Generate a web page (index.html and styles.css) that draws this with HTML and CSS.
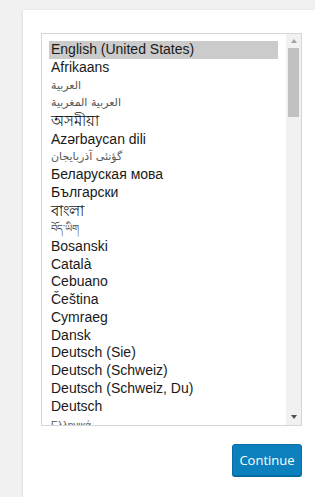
FILE: index.html
```html
<!DOCTYPE html>
<html lang="en">
<head>
<meta charset="utf-8">
<title>Select a default language</title>
<link rel="stylesheet" href="styles.css">
</head>
<body>
<div class="card">
  <div class="chooser">
    <div class="listbox">
      <div class="options">
        <div class="opt selected">English (United States)</div>
        <div class="opt">Afrikaans</div>
        <div class="opt ar" lang="ar">العربية</div>
        <div class="opt ar" lang="ary">العربية المغربية</div>
        <div class="opt bn" lang="as">অসমীয়া</div>
        <div class="opt">Azərbaycan dili</div>
        <div class="opt ar" lang="azb">گؤنئی آذربایجان</div>
        <div class="opt">Беларуская мова</div>
        <div class="opt">Български</div>
        <div class="opt bn" lang="bn">বাংলা</div>
        <div class="opt bo" lang="bo">བོད་ཡིག</div>
        <div class="opt">Bosanski</div>
        <div class="opt">Català</div>
        <div class="opt">Cebuano</div>
        <div class="opt">Čeština</div>
        <div class="opt">Cymraeg</div>
        <div class="opt">Dansk</div>
        <div class="opt">Deutsch (Sie)</div>
        <div class="opt">Deutsch (Schweiz)</div>
        <div class="opt">Deutsch (Schweiz, Du)</div>
        <div class="opt">Deutsch</div>
        <div class="opt el" lang="el">Ελληνικά</div>
      </div>
      <div class="scrollbar">
        <div class="arrow up"></div>
        <div class="thumb"></div>
        <div class="track"></div>
        <div class="arrow down"></div>
      </div>
    </div>
    <div class="actions">
      <button class="button-primary" type="button">Continue</button>
    </div>
  </div>
</div>
</body>
</html>
```

FILE: styles.css
```css
html, body {
  margin: 0;
  padding: 0;
  background: #f1f1f1;
  overflow: hidden;
  height: 497px;
}

.card {
  margin: 10px 0 0 23px;
  width: 292px;
  height: 487px;
  background: #fff;
  box-shadow: -1px 0 2px rgba(0, 0, 0, 0.08);
  padding: 23px 0 0 18px;
  box-sizing: border-box;
}

.chooser {
  width: 261px;
}

.listbox {
  display: flex;
  height: 393px;
  border: 1px solid #d6d6d6;
  box-sizing: border-box;
  background: #fff;
}

.options {
  flex: 1;
  overflow: hidden;
  padding: 7px 8px 0 7px;
  font-family: "Liberation Sans", Arial, sans-serif;
  font-size: 14px;
  color: #1a1a1a;
}

.opt {
  height: 17.75px;
  line-height: 17px;
  padding: 0 2px;
  white-space: nowrap;
  overflow: hidden;
}

.opt.selected {
  background: #cbcbcb;
}

.opt.ar {
  font-family: "DejaVu Sans", sans-serif;
  font-size: 11px;
  color: #555;
}

.opt.bn {
  font-size: 15px;
  height: 18.5px;
}

.opt.bo {
  font-size: 10px;
  color: #444;
}

.opt.el {
  font-size: 10px;
  line-height: 22px;
  color: #555;
}

.scrollbar {
  width: 15px;
  background: #f1f1f1;
  display: flex;
  flex-direction: column;
  align-items: center;
}

.arrow {
  width: 0;
  height: 0;
  border-left: 3.5px solid transparent;
  border-right: 3.5px solid transparent;
  margin: 5px 0;
}

.arrow.up {
  border-bottom: 4px solid #a3a3a3;
}

.arrow.down {
  border-top: 4px solid #505050;
  margin-bottom: 6px;
}

.thumb {
  width: 11px;
  height: 69px;
  background: #c1c1c1;
}

.track {
  flex: 1;
}

.actions {
  display: flex;
  justify-content: flex-end;
  padding-top: 18px;
}

.button-primary {
  width: 70px;
  height: 32px;
  padding: 0;
  background: #0b80bd;
  border: 1px solid #0a6ea6;
  border-radius: 3px;
  box-shadow: 0 1px 0 #006799;
  color: #fff;
  font-family: "Open Sans", "Noto Sans", sans-serif;
  font-size: 13px;
  font-weight: 500;
  cursor: pointer;
}
```
